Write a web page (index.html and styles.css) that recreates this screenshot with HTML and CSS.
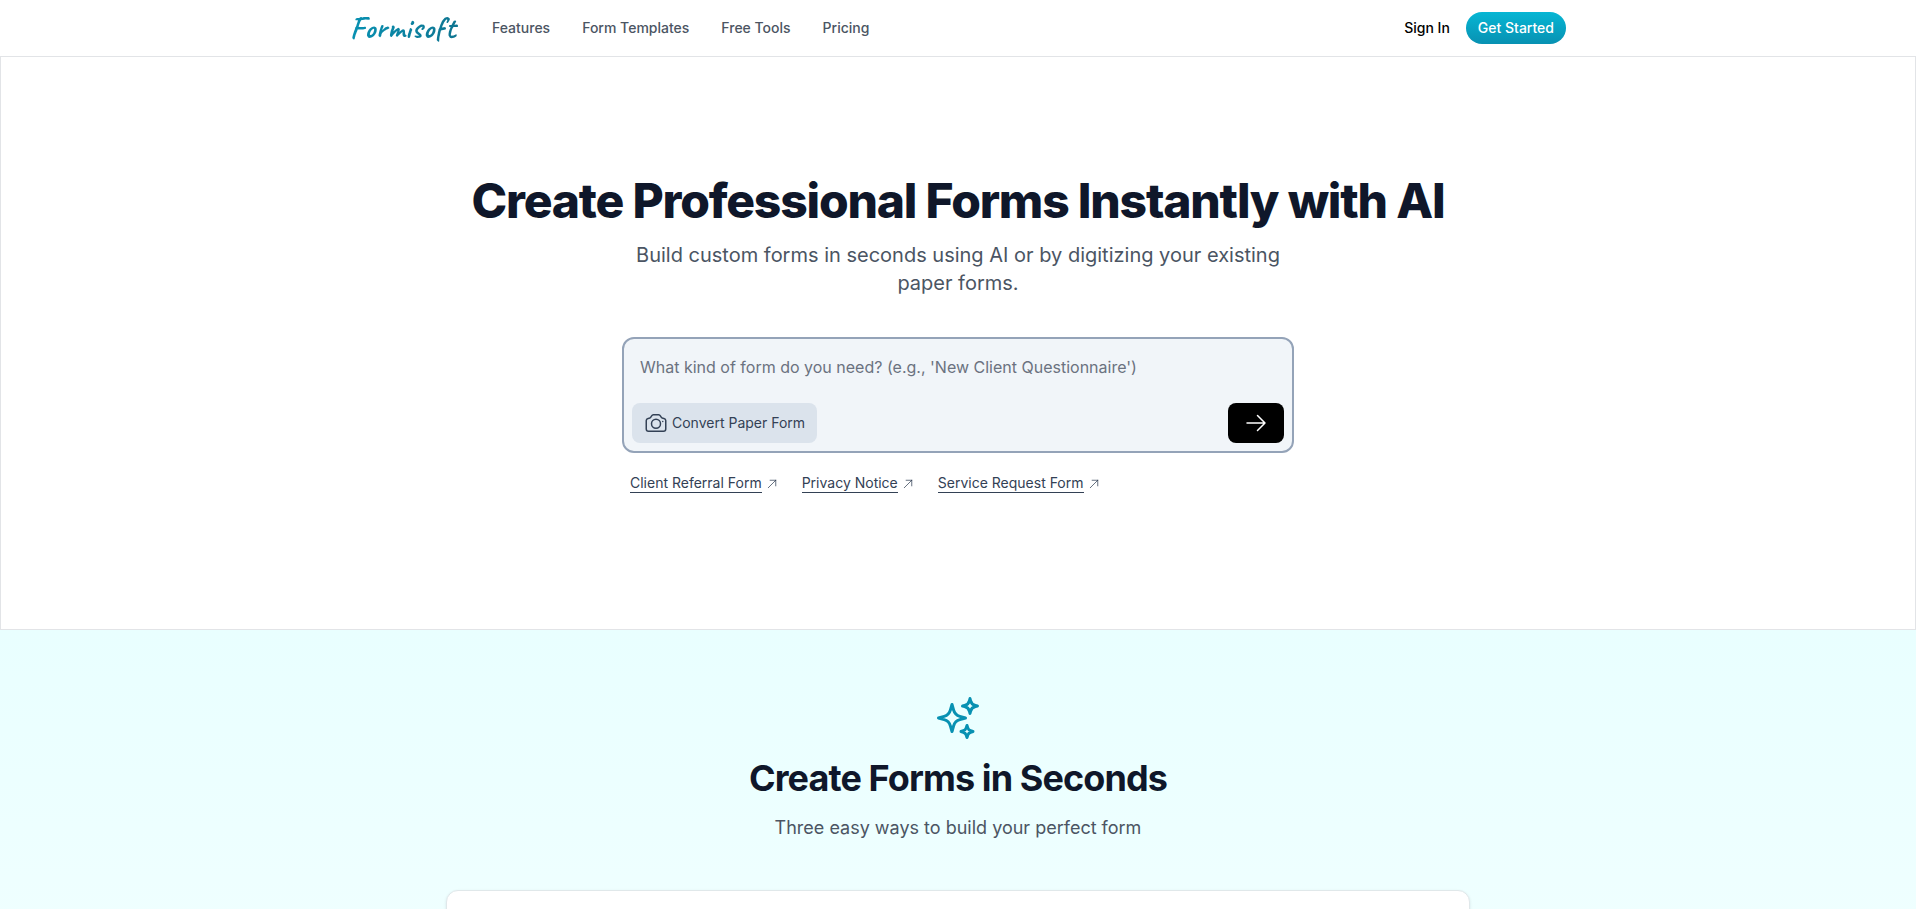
FILE: index.html
```html
<!DOCTYPE html>
<html lang="en">
<head>
<meta charset="utf-8">
<meta name="viewport" content="width=device-width, initial-scale=1">
<title>Formisoft</title>
<link rel="stylesheet" href="styles.css">
</head>
<body>
<header class="site-header">
  <div class="header-inner">
    <a class="logo" href="#">Formisoft</a>
    <nav class="nav" aria-label="Main">
      <a href="#">Features</a>
      <a href="#">Form Templates</a>
      <a href="#">Free Tools</a>
      <a href="#">Pricing</a>
    </nav>
    <div class="account">
      <a class="sign-in" href="#">Sign In</a>
      <a class="get-started" href="#">Get Started</a>
    </div>
  </div>
</header>
<main>
  <section class="hero">
    <h1 class="hero-title">Create Professional Forms Instantly with AI</h1>
    <p class="hero-text">Build custom forms in seconds using AI or by digitizing your existing paper forms.</p>
    <form class="prompt">
      <textarea class="prompt-input" rows="1" aria-label="Describe your form" placeholder="What kind of form do you need? (e.g., 'New Client Questionnaire')"></textarea>
      <div class="prompt-actions">
        <button class="convert" type="button">
          <svg class="icon" viewBox="0 0 24 24" aria-hidden="true"><path d="M6.827 6.175A2.31 2.31 0 015.186 7.23c-.38.054-.757.112-1.134.175C2.999 7.58 2.25 8.507 2.25 9.574V18a2.25 2.25 0 002.25 2.25h15A2.25 2.25 0 0021.75 18V9.574c0-1.067-.75-1.994-1.802-2.169a47.865 47.865 0 00-1.134-.175 2.31 2.31 0 01-1.64-1.055l-.822-1.316a2.192 2.192 0 00-1.736-1.039 48.774 48.774 0 00-5.232 0 2.192 2.192 0 00-1.736 1.039l-.821 1.316z"/><path d="M16.5 12.75a4.5 4.5 0 11-9 0 4.5 4.5 0 019 0zM18.75 10.5h.008v.008h-.008V10.5z"/></svg>
          <span>Convert Paper Form</span>
        </button>
        <button class="submit" type="submit" aria-label="Create form">
          <svg class="icon" viewBox="0 0 24 24" aria-hidden="true"><path d="M13.5 4.5L21 12m0 0l-7.5 7.5M21 12H3"/></svg>
        </button>
      </div>
    </form>
    <div class="examples">
      <a class="example" href="#"><span class="example-label">Client Referral Form</span><svg class="icon-small" viewBox="0 0 24 24" aria-hidden="true"><path d="M4.5 19.5l15-15m0 0H8.25m11.25 0v11.25"/></svg></a>
      <a class="example" href="#"><span class="example-label">Privacy Notice</span><svg class="icon-small" viewBox="0 0 24 24" aria-hidden="true"><path d="M4.5 19.5l15-15m0 0H8.25m11.25 0v11.25"/></svg></a>
      <a class="example" href="#"><span class="example-label">Service Request Form</span><svg class="icon-small" viewBox="0 0 24 24" aria-hidden="true"><path d="M4.5 19.5l15-15m0 0H8.25m11.25 0v11.25"/></svg></a>
    </div>
  </section>
  <section class="ways">
    <svg class="sparkles" viewBox="0 0 24 24" aria-hidden="true"><path d="M9.813 15.904L9 18.75l-.813-2.846a4.5 4.5 0 00-3.09-3.09L2.25 12l2.846-.813a4.5 4.5 0 003.09-3.09L9 5.25l.813 2.846a4.5 4.5 0 003.09 3.09L15.75 12l-2.846.813a4.5 4.5 0 00-3.09 3.09zM18.259 8.715L18 9.75l-.259-1.035a3.375 3.375 0 00-2.455-2.456L14.25 6l1.036-.259a3.375 3.375 0 002.455-2.456L18 2.25l.259 1.035a3.375 3.375 0 002.456 2.456L21.75 6l-1.035.259a3.375 3.375 0 00-2.456 2.456zM16.894 20.567L16.5 21.75l-.394-1.183a2.25 2.25 0 00-1.423-1.423L13.5 18.75l1.183-.394a2.25 2.25 0 001.423-1.423l.394-1.183.394 1.183a2.25 2.25 0 001.423 1.423l1.183.394-1.183.394a2.25 2.25 0 00-1.423 1.423z"/></svg>
    <h2 class="ways-title">Create Forms in Seconds</h2>
    <p class="ways-text">Three easy ways to build your perfect form</p>
    <div class="ways-card"></div>
  </section>
</main>
</body>
</html>
```
FILE: styles.css
```css
*, *::before, *::after { box-sizing: border-box; }

body {
  margin: 0;
  background: #fff;
  color: #0f172a;
  font-family: Inter, "Liberation Sans", sans-serif;
  font-size: 14px;
  line-height: 20px;
}

h1, h2, p { margin: 0; }
a { color: inherit; text-decoration: none; }
button, textarea { font: inherit; border: 0; }
svg { flex: none; fill: none; stroke: currentColor; stroke-linecap: round; stroke-linejoin: round; }

.site-header { border-bottom: 1px solid #e2e4e7; }

.header-inner {
  display: flex;
  align-items: center;
  max-width: 1280px;
  height: 56px;
  margin: 0 auto;
  padding: 0 32px;
  font-weight: 500;
}

.logo {
  min-width: 110px;
  background: linear-gradient(to right, #0891b2, #0e7490);
  background-clip: text;
  color: transparent;
  font-family: Caveat, Lato, cursive;
  font-size: 30px;
  font-weight: 700;
  line-height: 36px;
  letter-spacing: 0.025em;
}

.nav { display: flex; gap: 32px; margin-left: 32px; color: #4b5563; }
.account { display: flex; align-items: center; gap: 16px; margin-left: auto; }
.sign-in { color: #000; }

.get-started {
  padding: 6px 12px;
  border-radius: 16px;
  background: linear-gradient(#06b6d4, #0891b2);
  color: #fff;
}

.hero {
  display: flex;
  flex-direction: column;
  align-items: center;
  padding: 120px 32px 136px;
  border: 1px solid #e2e4e7;
  border-top: 0;
}

.hero-title { font-size: 48px; font-weight: 800; line-height: 48px; text-align: center; letter-spacing: -0.025em; }

.hero-text {
  max-width: 672px;
  margin-top: 16px;
  color: #4b5563;
  font-size: 20px;
  line-height: 28px;
  text-align: center;
}

.prompt {
  width: 100%;
  max-width: 672px;
  margin-top: 40px;
  border: 2px solid #94a3b8;
  border-radius: 12px;
  background: #f1f5f9;
}

.prompt-input {
  display: block;
  width: 100%;
  height: 64px;
  padding: 16px;
  resize: none;
  outline: 0;
  background: transparent;
  font-size: 16px;
  line-height: 24px;
}

.prompt-input::placeholder { color: #6b7280; }
.prompt-actions { display: flex; justify-content: space-between; padding: 0 8px 8px; }

.convert {
  display: flex;
  align-items: center;
  gap: 4px;
  height: 40px;
  padding: 0 12px;
  border-radius: 8px;
  background: #dbe3ec;
  color: #334155;
}

.submit {
  display: flex;
  align-items: center;
  justify-content: center;
  width: 56px;
  height: 40px;
  padding: 0;
  border-radius: 8px;
  background: #000;
  color: #fff;
}

.icon { width: 24px; height: 24px; stroke-width: 1.5; }

.examples {
  display: flex;
  gap: 24px;
  width: 100%;
  max-width: 672px;
  margin-top: 21px;
  padding: 0 8px;
  color: #334155;
  line-height: 18px;
}

.example { display: flex; align-items: center; gap: 4px; }
.example-label { border-bottom: 1px solid currentColor; }
.icon-small { width: 12px; height: 12px; stroke-width: 1.5; }

.ways {
  display: flex;
  flex-direction: column;
  align-items: center;
  padding: 64px 32px;
  background: linear-gradient(#e9ffff, #f6ffff);
  text-align: center;
}

.sparkles { width: 48px; height: 48px; color: #0891b2; stroke-width: 1.5; }
.ways-title { margin-top: 16px; font-size: 36px; font-weight: 700; line-height: 40px; letter-spacing: -0.025em; }
.ways-text { margin-top: 16px; color: #4b5563; font-size: 18px; line-height: 28px; }

.ways-card {
  width: 100%;
  max-width: 1024px;
  min-height: 320px;
  margin-top: 48px;
  border: 1px solid #e0e8ea;
  border-radius: 12px;
  background: #fff;
  box-shadow: 0 1px 3px rgba(15, 23, 42, 0.1);
}
```
